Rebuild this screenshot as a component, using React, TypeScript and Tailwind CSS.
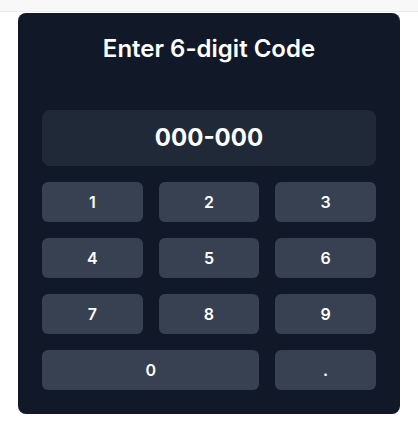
import React from "react";

export default function App() {
  const keys = ["1", "2", "3", "4", "5", "6", "7", "8", "9"];
  return (
    <div className="min-h-[433px] bg-white" style={{ fontFamily: "Inter, 'Noto Sans', sans-serif" }}>
      <div className="h-3 bg-[#f8f8f8] border-b border-[#ececec]" />
      <div className="mx-auto mt-[1px] w-[382px] rounded-lg bg-[#111827] p-6">
        <h1 className="mb-[49px] text-center text-2xl font-semibold leading-none text-white">Enter 6-digit Code</h1>
        <div className="mb-4 rounded-lg bg-[#1f2937] py-3 text-center text-2xl font-bold leading-8 text-white">
          000-000
        </div>
        <div className="grid grid-cols-3 gap-4">
          {keys.map((k) => (
            <button key={k} className="h-10 rounded-md bg-[#374151] text-base font-semibold text-white">
              {k}
            </button>
          ))}
          <button className="col-span-2 h-10 rounded-md bg-[#374151] text-base font-semibold text-white">0</button>
          <button className="h-10 rounded-md bg-[#374151] text-base font-semibold text-white">.</button>
        </div>
      </div>
    </div>
  );
}
